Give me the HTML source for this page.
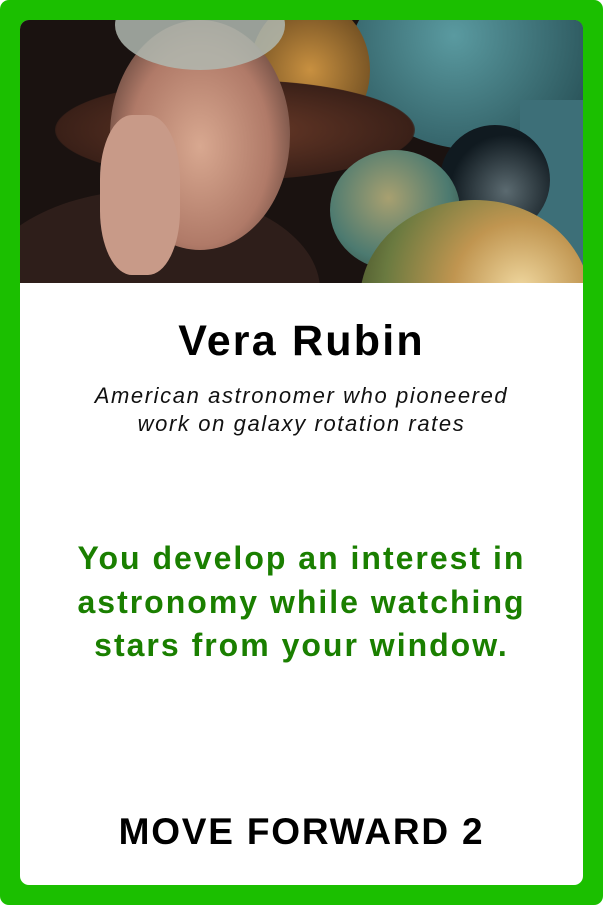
<!DOCTYPE html>
<html><head><style>
html,body{margin:0;padding:0;}
body{width:603px;height:905px;background:#fff;font-family:"Liberation Sans",sans-serif;}
.outer{position:absolute;left:0;top:0;width:603px;height:905px;background:#1bbf00;border-radius:9px;}
.inner{position:absolute;left:20px;top:20px;width:563px;height:865px;background:#fff;border-radius:9px;overflow:hidden;}
.photo{position:absolute;left:0;top:0;width:563px;height:263px;background:#1a1210;overflow:hidden;}
.photo div{position:absolute;border-radius:50%;}
.t{position:absolute;left:0;width:563px;text-align:center;white-space:nowrap;}
</style></head><body>
<div class="outer"></div>
<div class="inner">
 <div class="photo">
  <div style="left:330px;top:-60px;width:260px;height:190px;background:radial-gradient(circle at 40% 40%,#5a9aa0,#2e5a60 70%,#1d3a40);"></div>
  <div style="left:500px;top:80px;width:80px;height:180px;border-radius:0;background:#3d6f78;"></div>
  <div style="left:420px;top:105px;width:110px;height:110px;background:radial-gradient(circle at 60% 60%,#5b6a70,#101a20 60%);"></div>
  <div style="left:230px;top:-20px;width:120px;height:140px;background:radial-gradient(circle,#c89040,#6a4a20 80%);"></div>
  <div style="left:35px;top:60px;width:360px;height:100px;background:radial-gradient(ellipse,#6a3a28,#3a2018 70%,transparent 72%);"></div>
  <div style="left:310px;top:130px;width:130px;height:120px;background:radial-gradient(circle at 45% 40%,#a8a070,#4c7a70 60%,#2a3a30);"></div>
  <div style="left:340px;top:180px;width:230px;height:200px;background:radial-gradient(circle at 70% 45%,#f0d8a0,#c09550 35%,#6a7a40 70%,#3a4020);"></div>
  <div style="left:-40px;top:170px;width:340px;height:200px;background:#2e1e1a;"></div>
  <div style="left:90px;top:0px;width:180px;height:230px;background:radial-gradient(ellipse at 50% 55%,#d8a890,#b07a68 55%,#6a4a40 80%,transparent 82%);"></div>
  <div style="left:95px;top:-40px;width:170px;height:90px;background:#b0b8b0;opacity:.85;"></div>
  <div style="left:80px;top:95px;width:80px;height:160px;border-radius:40%;background:#c89a88;"></div>
 </div>
 <div class="t" style="top:297px;font-size:43px;letter-spacing:2.2px;font-weight:bold;color:#000;line-height:48px;">Vera Rubin</div>
 <div class="t" style="top:362px;font-size:22px;letter-spacing:1.6px;font-style:italic;color:#111;line-height:28px;">American astronomer who pioneered<br>work on galaxy rotation rates</div>
 <div class="t" style="top:517px;font-size:32px;letter-spacing:2px;font-weight:bold;color:#1a7f00;line-height:43.5px;">You develop an interest in<br>astronomy while watching<br>stars from your window.</div>
 <div class="t" style="top:790px;font-size:37px;letter-spacing:1.8px;font-weight:bold;color:#000;line-height:44px;">MOVE FORWARD 2</div>
</div>
</body></html>
